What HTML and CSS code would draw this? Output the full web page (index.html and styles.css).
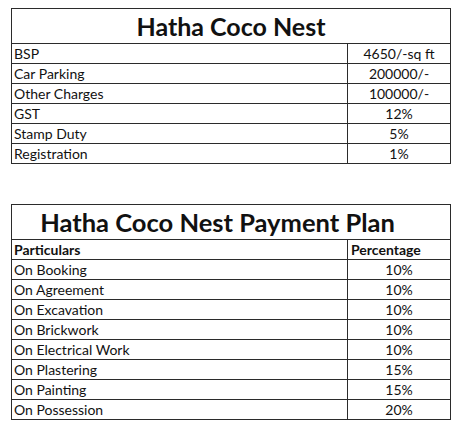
FILE: index.html
```html
<!DOCTYPE html>
<html>
<head>
<meta charset="utf-8">
<link rel="stylesheet" href="styles.css">
</head>
<body>
<div class="page">
  <table class="sheet">
    <colgroup><col class="c1"><col class="c2"></colgroup>
    <tr><th colspan="2" class="title t1">Hatha Coco Nest</th></tr>
    <tr><td class="lbl">BSP</td><td class="val">4650/-sq ft</td></tr>
    <tr><td class="lbl">Car Parking</td><td class="val">200000/-</td></tr>
    <tr><td class="lbl">Other Charges</td><td class="val">100000/-</td></tr>
    <tr><td class="lbl">GST</td><td class="val">12%</td></tr>
    <tr><td class="lbl">Stamp Duty</td><td class="val">5%</td></tr>
    <tr><td class="lbl">Registration</td><td class="val">1%</td></tr>
  </table>

  <table class="sheet plan">
    <colgroup><col class="c1"><col class="c2"></colgroup>
    <tr><th colspan="2" class="title t2">Hatha Coco Nest Payment Plan</th></tr>
    <tr class="head"><td class="lbl">Particulars</td><td class="hval">Percentage</td></tr>
    <tr><td class="lbl">On Booking</td><td class="val">10%</td></tr>
    <tr><td class="lbl">On Agreement</td><td class="val">10%</td></tr>
    <tr><td class="lbl">On Excavation</td><td class="val">10%</td></tr>
    <tr><td class="lbl">On Brickwork</td><td class="val">10%</td></tr>
    <tr><td class="lbl">On Electrical Work</td><td class="val">10%</td></tr>
    <tr><td class="lbl">On Plastering</td><td class="val">15%</td></tr>
    <tr><td class="lbl">On Painting</td><td class="val">15%</td></tr>
    <tr><td class="lbl">On Possession</td><td class="val">20%</td></tr>
  </table>
</div>
</body>
</html>
```

FILE: styles.css
```css
html, body {
  margin: 0;
  padding: 0;
  background: #ffffff;
}
.page {
  padding: 8px 11px 0 11px;
  display: flex;
  flex-direction: column;
  gap: 40px;
  font-family: "Lato", "Open Sans", sans-serif;
  color: #111;
}
.sheet {
  width: 439px;
  border-collapse: collapse;
  table-layout: fixed;
}
.sheet .c1 {
  width: 336px;
}
.sheet .c2 {
  width: 103px;
}
.sheet td, .sheet th {
  border: 1px solid #2b2b2b;
  padding: 0 2px;
  height: 19px;
  font-size: 14px;
  line-height: 19px;
  white-space: nowrap;
}
.sheet .title {
  height: 34px;
  font-weight: 700;
  line-height: 34px;
  text-align: center;
}
.sheet .t1 {
  font-size: 25px;
}
.sheet .t2 {
  font-size: 25.5px;
  padding-right: 29px;
}
.sheet .lbl {
  text-align: left;
}
.sheet .val {
  text-align: center;
}
.plan .head td {
  font-weight: 700;
}
.plan .hval {
  text-align: left;
  padding-left: 3px;
}
```
